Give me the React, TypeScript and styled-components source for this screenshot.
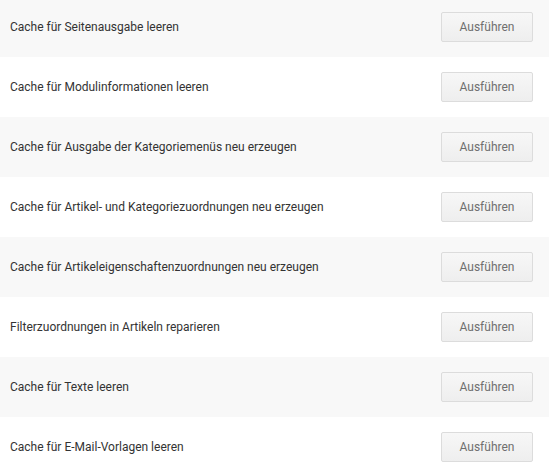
import React from "react";
import styled, { createGlobalStyle } from "styled-components";

const Global = createGlobalStyle`
  html, body { margin: 0; padding: 0; background: #fff; }
  body { font-family: Roboto, "Noto Sans", sans-serif; overflow: hidden; }
`;

const List = styled.div`
  display: flex;
  flex-direction: column;
  margin-top: -3px;
`;

const Row = styled.div<{ $shaded: boolean }>`
  height: 60px;
  box-sizing: border-box;
  display: flex;
  align-items: center;
  justify-content: space-between;
  padding: 0 16px 0 10px;
  background: ${(p) => (p.$shaded ? "#f8f8f8" : "#ffffff")};
`;

const Label = styled.span`
  font-size: 12px;
  color: #333;
`;

const Button = styled.button`
  width: 92px;
  height: 30px;
  box-sizing: border-box;
  border: 1px solid #dcdcdc;
  border-radius: 2px;
  background: linear-gradient(#f7f7f7, #eeeeee);
  color: #6f6f6f;
  font-family: Roboto, "Noto Sans", sans-serif;
  font-size: 12px;
  padding: 0;
  cursor: pointer;
`;

const items = [
  "Cache für Seitenausgabe leeren",
  "Cache für Modulinformationen leeren",
  "Cache für Ausgabe der Kategoriemenüs neu erzeugen",
  "Cache für Artikel- und Kategoriezuordnungen neu erzeugen",
  "Cache für Artikeleigenschaftenzuordnungen neu erzeugen",
  "Filterzuordnungen in Artikeln reparieren",
  "Cache für Texte leeren",
  "Cache für E-Mail-Vorlagen leeren",
];

export default function App() {
  return (
    <>
      <Global />
      <List>
        {items.map((t, i) => (
          <Row key={t} $shaded={i % 2 === 0}>
            <Label>{t}</Label>
            <Button>Ausführen</Button>
          </Row>
        ))}
      </List>
    </>
  );
}
